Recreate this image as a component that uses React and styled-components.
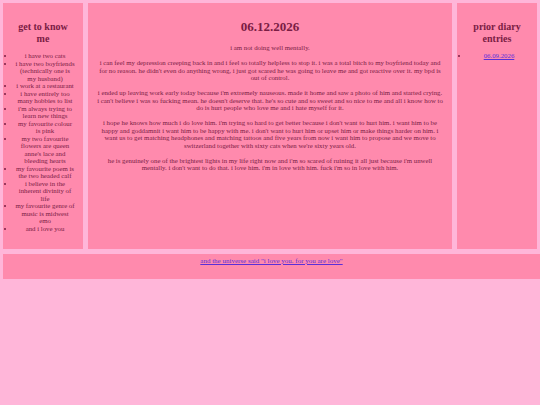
import React from "react";
import styled, { createGlobalStyle } from "styled-components";

const Global = createGlobalStyle`
  html, body { margin: 0; padding: 0; }
  body {
    background: #ffb6d9;
    font-family: "Liberation Serif", "Times New Roman", serif;
    color: #7a1c44;
    overflow: hidden;
  }
`;

const Page = styled.div`
  padding: 3px;
  width: 540px;
  box-sizing: border-box;
`;

const Row = styled.div`
  display: flex;
  gap: 5px;
  height: 246px;
`;

const Panel = styled.div`
  background: #ff8aad;
  box-sizing: border-box;
  ${(p) =>
    p.$grow
      ? "flex: 1; padding: 12px 4px 4px;"
      : `width: ${p.$w}px; flex: none; padding: 12px 8px 4px 4px;`}
`;

const SideTitle = styled.h2`
  font-size: 10px;
  font-weight: bold;
  text-align: center;
  margin: 6px 6px 8px 10px;
  line-height: 11.5px;
`;

const MainTitle = styled.h1`
  font-size: 13px;
  font-weight: bold;
  text-align: center;
  margin: 4px 0 10px;
  line-height: 15px;
`;

const List = styled.ul`
  margin: 0;
  padding-left: 8px;
  font-size: 6.8px;
  line-height: 7.5px;
  text-align: center;
  list-style: disc;
`;

const Item = styled.li``;

const Text = styled.p`
  font-size: 6.8px;
  line-height: 7.5px;
  text-align: center;
  margin: 0 5px 7.5px;
`;

const Link = styled.a`
  color: #5b2fd8;
  text-decoration: underline;
`;

const Footer = styled.div`
  background: #ff8aad;
  margin-top: 5px;
  margin-right: -3px;
  height: 25px;
  display: flex;
  align-items: center;
  justify-content: center;
  font-size: 7px;
  padding-bottom: 11px;
  box-sizing: border-box;
`;

const facts = [
  "i have two cats",
  "i have two boyfriends (technically one is my husband)",
  "i work at a restaurant",
  "i have entirely too many hobbies to list",
  "i'm always trying to learn new things",
  "my favourite colour is pink",
  "my two favourite flowers are queen anne's lace and bleeding hearts",
  "my favourite poem is the two headed calf",
  "i believe in the inherent divinity of life",
  "my favourite genre of music is midwest emo",
  "and i love you",
];

const paragraphs = [
  "i am not doing well mentally.",
  "i can feel my depression creeping back in and i feel so totally helpless to stop it. i was a total bitch to my boyfriend today and for no reason. he didn't even do anything wrong, i just got scared he was going to leave me and got reactive over it. my bpd is out of control.",
  "i ended up leaving work early today because i'm extremely nauseous. made it home and saw a photo of him and started crying. i can't believe i was so fucking mean. he doesn't deserve that. he's so cute and so sweet and so nice to me and all i know how to do is hurt people who love me and i hate myself for it.",
  "i hope he knows how much i do love him. i'm trying so hard to get better because i don't want to hurt him. i want him to be happy and goddamnit i want him to be happy with me. i don't want to hurt him or upset him or make things harder on him. i want us to get matching headphones and matching tattoos and five years from now i want him to propose and we move to switzerland together with sixty cats when we're sixty years old.",
  "he is genuinely one of the brightest lights in my life right now and i'm so scared of ruining it all just because i'm unwell mentally. i don't want to do that. i love him. i'm in love with him. fuck i'm so in love with him.",
];

export default function App() {
  return (
    <Page>
      <Global />
      <Row>
        <Panel $w={80}>
          <SideTitle>get to know me</SideTitle>
          <List>
            {facts.map((f) => (
              <Item key={f}>{f}</Item>
            ))}
          </List>
        </Panel>
        <Panel $grow>
          <MainTitle>06.12.2026</MainTitle>
          {paragraphs.map((p, i) => (
            <Text key={i}>{p}</Text>
          ))}
        </Panel>
        <Panel $w={80}>
          <SideTitle>prior diary entries</SideTitle>
          <List>
            <Item>
              <Link href="#">06.09.2026</Link>
            </Item>
          </List>
        </Panel>
      </Row>
      <Footer>
        <Link href="#">and the universe said "i love you. for you are love"</Link>
      </Footer>
    </Page>
  );
}
